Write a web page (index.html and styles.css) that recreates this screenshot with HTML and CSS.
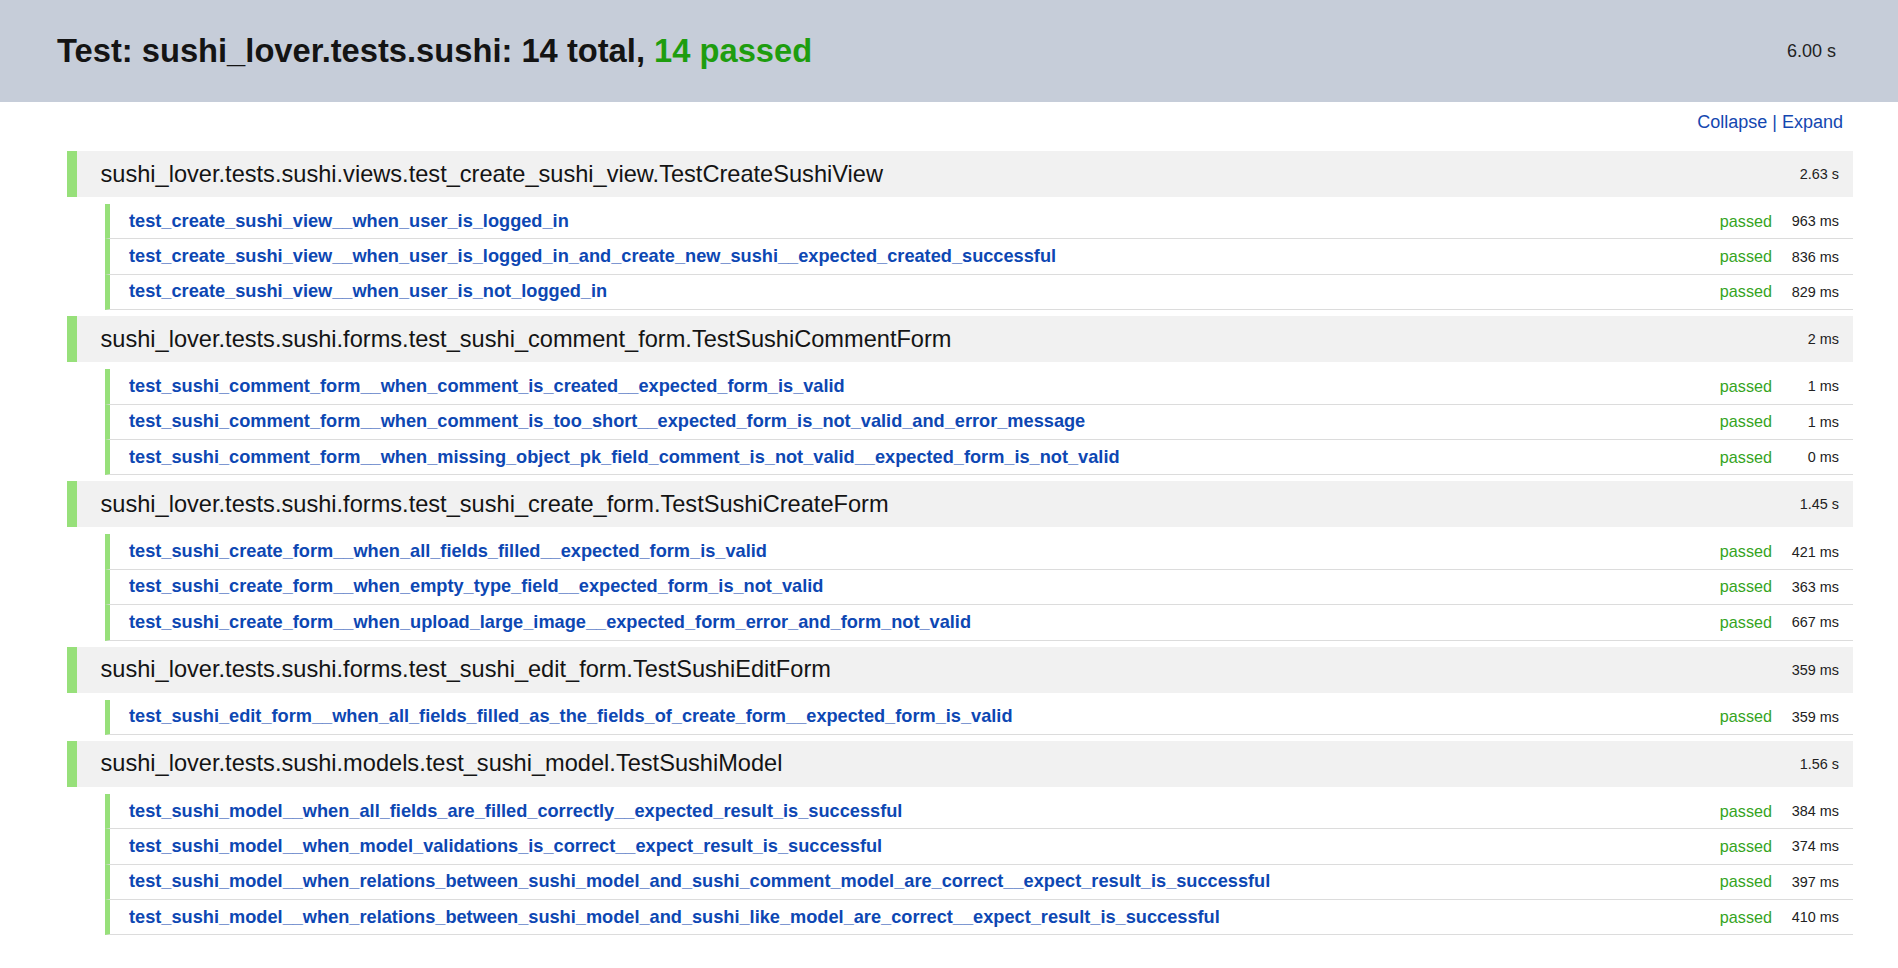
FILE: index.html
```html
<!DOCTYPE html>
<html lang="en">
<head>
<meta charset="utf-8">
<title>Test: sushi_lover.tests.sushi</title>
<link rel="stylesheet" href="styles.css">
</head>
<body>
<header class="top">
  <h1 class="title">Test: sushi_lover.tests.sushi: 14 total, <span class="ok">14 passed</span></h1>
  <span class="total-time">6.00 s</span>
</header>
<main class="report">
  <div class="toolbar"><a href="#" class="tool-link">Collapse</a> | <a href="#" class="tool-link">Expand</a></div>

  <section class="suite">
    <div class="suite-head"><span class="suite-name">sushi_lover.tests.sushi.views.test_create_sushi_view.TestCreateSushiView</span><span class="suite-dur">2.63 s</span></div>
    <ul class="tests">
      <li class="test"><a href="#" class="test-name">test_create_sushi_view__when_user_is_logged_in</a><span class="status">passed</span><span class="dur">963 ms</span></li>
      <li class="test"><a href="#" class="test-name">test_create_sushi_view__when_user_is_logged_in_and_create_new_sushi__expected_created_successful</a><span class="status">passed</span><span class="dur">836 ms</span></li>
      <li class="test"><a href="#" class="test-name">test_create_sushi_view__when_user_is_not_logged_in</a><span class="status">passed</span><span class="dur">829 ms</span></li>
    </ul>
  </section>

  <section class="suite">
    <div class="suite-head"><span class="suite-name">sushi_lover.tests.sushi.forms.test_sushi_comment_form.TestSushiCommentForm</span><span class="suite-dur">2 ms</span></div>
    <ul class="tests">
      <li class="test"><a href="#" class="test-name">test_sushi_comment_form__when_comment_is_created__expected_form_is_valid</a><span class="status">passed</span><span class="dur">1 ms</span></li>
      <li class="test"><a href="#" class="test-name">test_sushi_comment_form__when_comment_is_too_short__expected_form_is_not_valid_and_error_message</a><span class="status">passed</span><span class="dur">1 ms</span></li>
      <li class="test"><a href="#" class="test-name">test_sushi_comment_form__when_missing_object_pk_field_comment_is_not_valid__expected_form_is_not_valid</a><span class="status">passed</span><span class="dur">0 ms</span></li>
    </ul>
  </section>

  <section class="suite">
    <div class="suite-head"><span class="suite-name">sushi_lover.tests.sushi.forms.test_sushi_create_form.TestSushiCreateForm</span><span class="suite-dur">1.45 s</span></div>
    <ul class="tests">
      <li class="test"><a href="#" class="test-name">test_sushi_create_form__when_all_fields_filled__expected_form_is_valid</a><span class="status">passed</span><span class="dur">421 ms</span></li>
      <li class="test"><a href="#" class="test-name">test_sushi_create_form__when_empty_type_field__expected_form_is_not_valid</a><span class="status">passed</span><span class="dur">363 ms</span></li>
      <li class="test"><a href="#" class="test-name">test_sushi_create_form__when_upload_large_image__expected_form_error_and_form_not_valid</a><span class="status">passed</span><span class="dur">667 ms</span></li>
    </ul>
  </section>

  <section class="suite">
    <div class="suite-head"><span class="suite-name">sushi_lover.tests.sushi.forms.test_sushi_edit_form.TestSushiEditForm</span><span class="suite-dur">359 ms</span></div>
    <ul class="tests">
      <li class="test"><a href="#" class="test-name">test_sushi_edit_form__when_all_fields_filled_as_the_fields_of_create_form__expected_form_is_valid</a><span class="status">passed</span><span class="dur">359 ms</span></li>
    </ul>
  </section>

  <section class="suite">
    <div class="suite-head"><span class="suite-name">sushi_lover.tests.sushi.models.test_sushi_model.TestSushiModel</span><span class="suite-dur">1.56 s</span></div>
    <ul class="tests">
      <li class="test"><a href="#" class="test-name">test_sushi_model__when_all_fields_are_filled_correctly__expected_result_is_successful</a><span class="status">passed</span><span class="dur">384 ms</span></li>
      <li class="test"><a href="#" class="test-name">test_sushi_model__when_model_validations_is_correct__expect_result_is_successful</a><span class="status">passed</span><span class="dur">374 ms</span></li>
      <li class="test"><a href="#" class="test-name">test_sushi_model__when_relations_between_sushi_model_and_sushi_comment_model_are_correct__expect_result_is_successful</a><span class="status">passed</span><span class="dur">397 ms</span></li>
      <li class="test"><a href="#" class="test-name">test_sushi_model__when_relations_between_sushi_model_and_sushi_like_model_are_correct__expect_result_is_successful</a><span class="status">passed</span><span class="dur">410 ms</span></li>
    </ul>
  </section>
</main>
</body>
</html>
```

FILE: styles.css
```css
* { box-sizing: border-box; }

html, body {
  margin: 0;
  padding: 0;
  background: #ffffff;
}

body {
  font-family: "Liberation Sans", Arial, Helvetica, sans-serif;
  font-size: 18px;
  color: #1a1a1a;
}

.top {
  height: 102px;
  background: #c6cdd9;
  display: flex;
  align-items: center;
  justify-content: space-between;
  padding: 0 62px 0 57px;
}

.title {
  margin: 0;
  font-size: 32.7px;
  font-weight: bold;
  color: #141414;
  line-height: normal;
}

.ok {
  color: #1e9d0f;
}

.total-time {
  font-size: 18px;
  color: #222;
}

.report {
  padding: 0 45px 0 67px;
}

.toolbar {
  margin-top: 9px;
  margin-bottom: 18px;
  height: 22px;
  line-height: 22px;
  text-align: right;
  padding-right: 10px;
  color: #1447b0;
}

.tool-link {
  color: #1447b0;
  text-decoration: none;
}

.suite-head {
  height: 46px;
  display: flex;
  align-items: center;
  justify-content: space-between;
  background: #f1f1f1;
  border-left: 10px solid #97e07a;
  padding: 0 14px 0 23.5px;
}

.suite-name {
  font-size: 23.6px;
  color: #141414;
}

.suite-dur {
  font-size: 14.4px;
  color: #222;
}

.tests {
  list-style: none;
  margin: 7px 0 6px 38px;
  padding: 0;
}

.test {
  height: 35.4px;
  display: flex;
  align-items: center;
  border-left: 5px solid #97e07a;
  border-bottom: 1px solid #dcdcdc;
  padding: 0 14px 0 19px;
}

.test-name {
  flex: 1;
  font-size: 18.2px;
  font-weight: bold;
  color: #0d47b3;
  text-decoration: none;
}

.status {
  font-size: 16.2px;
  color: #36a41e;
}

.dur {
  width: 67px;
  text-align: right;
  font-size: 14.4px;
  color: #222;
}
```
